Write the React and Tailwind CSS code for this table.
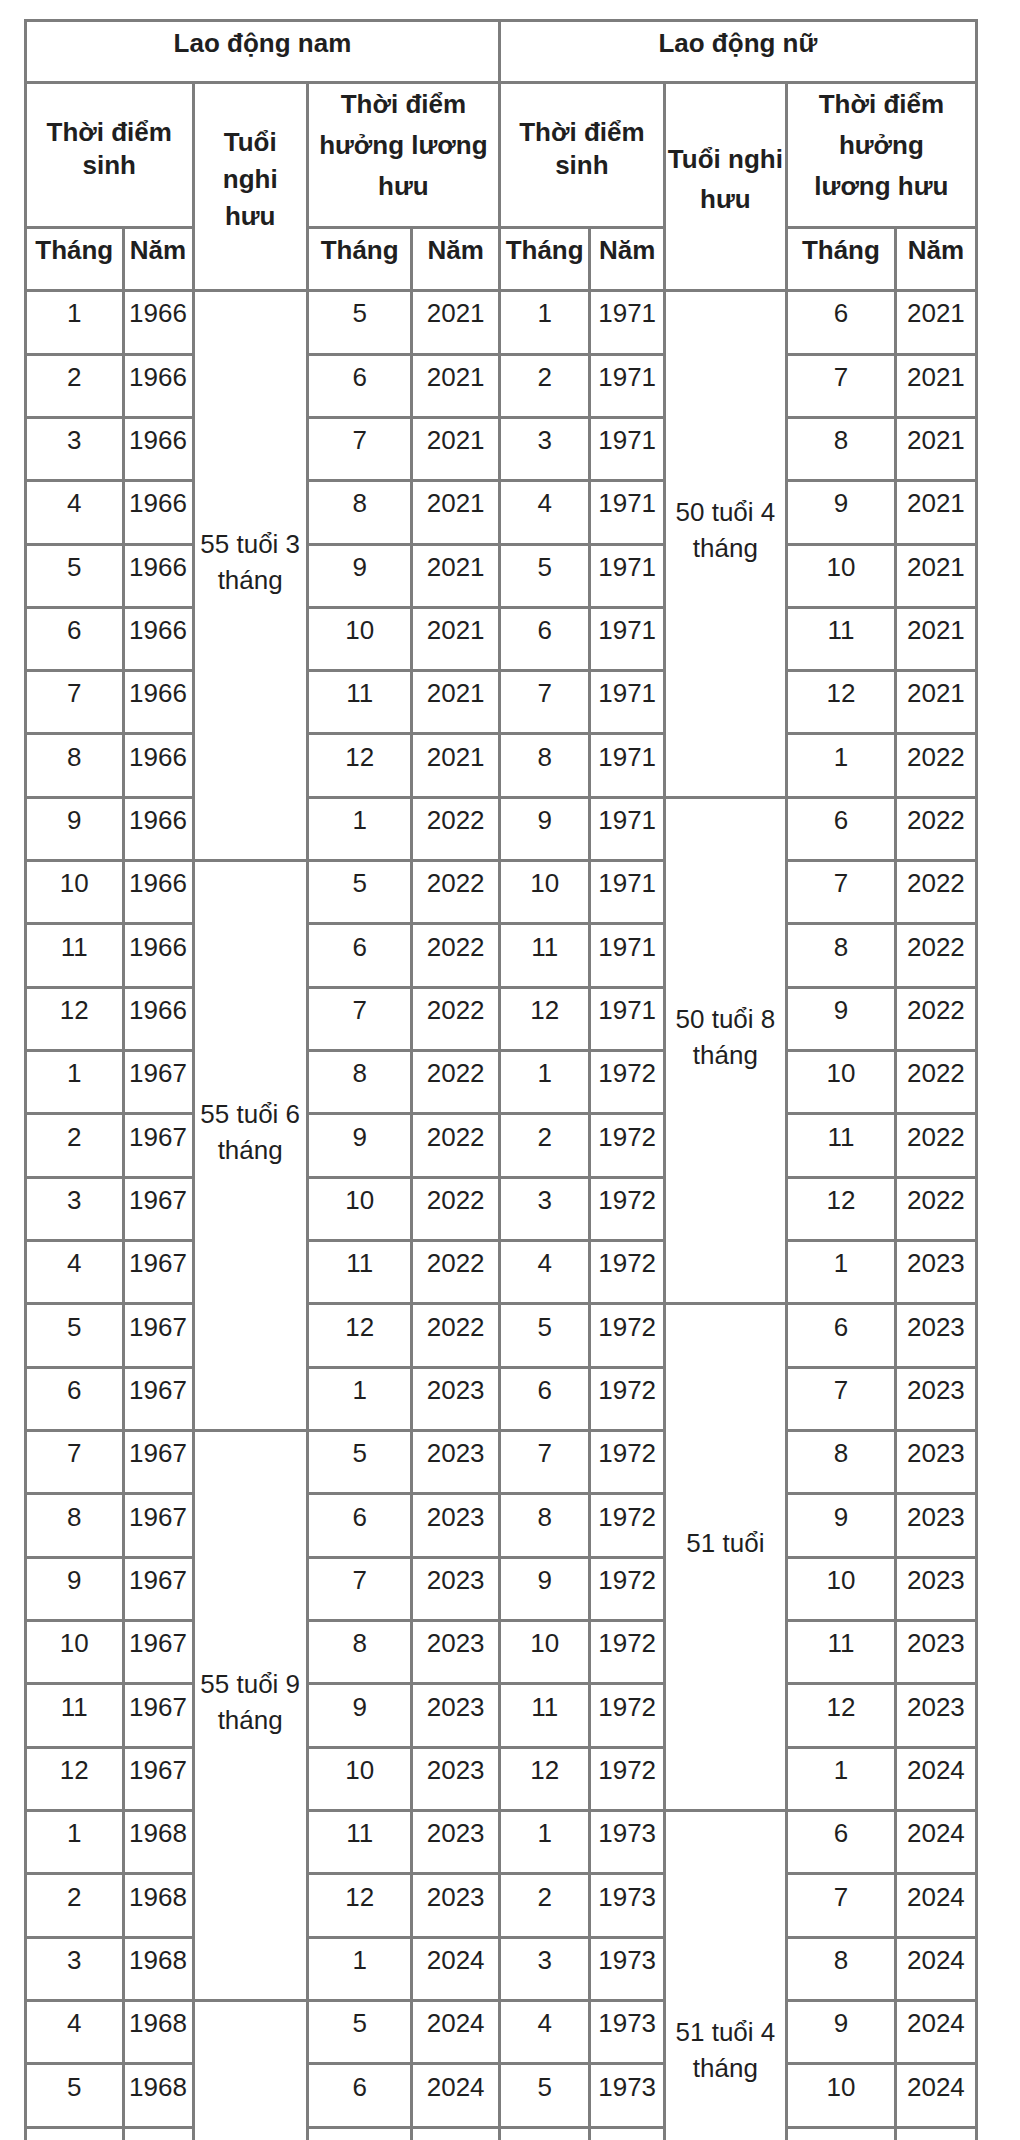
import React from 'react';

const MALE_AGES = ['55 tuổi 3 tháng', '55 tuổi 6 tháng', '55 tuổi 9 tháng', '56 tuổi'];
const MALE_AGE_MONTHS = [55 * 12 + 3, 55 * 12 + 6, 55 * 12 + 9, 56 * 12];
const FEMALE_AGES = ['50 tuổi 4 tháng', '50 tuổi 8 tháng', '51 tuổi', '51 tuổi 4 tháng'];
const FEMALE_AGE_MONTHS = [50 * 12 + 4, 50 * 12 + 8, 51 * 12, 51 * 12 + 4];

// rows rendered; grid keeps extra empty tracks so the last rowspans keep full height
const ROWS = 30;

// full class names so Tailwind picks them up
const SPAN = { 8: 'row-span-8', 9: 'row-span-9' };

const addMonths = (month, year, n) => {
  const total = year * 12 + (month - 1) + n;
  return { m: (total % 12) + 1, y: Math.floor(total / 12) };
};

const Cell = ({ children, className = '' }) => (
  <div className={`bg-white flex items-center justify-center text-center ${className}`}>
    <div>{children}</div>
  </div>
);

const buildRows = () => {
  const rows = [];
  for (let i = 0; i < ROWS; i++) {
    const male = addMonths(1, 1966, i);
    const female = addMonths(1, 1971, i);
    const mg = Math.floor(i / 9);
    const fg = Math.floor(i / 8);
    rows.push({
      male,
      female,
      mPension: addMonths(male.m, male.y, MALE_AGE_MONTHS[mg] + 1),
      fPension: addMonths(female.m, female.y, FEMALE_AGE_MONTHS[fg] + 1),
      maleAge: i % 9 === 0 ? MALE_AGES[mg] : null,
      femaleAge: i % 8 === 0 ? FEMALE_AGES[fg] : null,
    });
  }
  return rows;
};

const AgeText = ({ text }) => {
  const parts = text.split(' ');
  if (parts.length <= 2) return <>{text}</>;
  return (
    <>
      {parts.slice(0, 3).join(' ')}
      <br />
      {parts.slice(3).join(' ')}
    </>
  );
};

export default function App() {
  const rows = buildRows();
  const d = 'leading-[36px] pb-[18px]';
  const span = 'leading-[36px] pb-[28px]';
  const th = 'font-bold leading-[36px] pb-[19px]';

  return (
    <div
      className="h-[2140px] overflow-hidden bg-white pt-[19px] pl-[24px] text-[26px] text-[#1f1f1f]"
      style={{ fontFamily: '"Liberation Sans", Arial, sans-serif' }}
    >
      <div className="grid w-fit gap-[3px] p-[3px] bg-[#7d7d7d] grid-cols-[94.5px_67px_111.4px_101.5px_84.5px_87.5px_71.5px_119px_106px_78px] grid-rows-[58.5px_142.7px_60px_repeat(36,60.34px)]">
        {/* header row 1 */}
        <Cell className="col-span-5 font-bold leading-[36px] pb-[17px]">Lao động nam</Cell>
        <Cell className="col-span-5 font-bold leading-[36px] pb-[17px]">Lao động nữ</Cell>

        {/* header row 2 */}
        <Cell className="col-span-2 font-bold leading-[33px] pb-[12px]">
          Thời điểm<br />sinh
        </Cell>
        <Cell className="row-span-2 font-bold leading-[37px] pb-[14px]">
          Tuổi<br />nghi<br />hưu
        </Cell>
        <Cell className="col-span-2 font-bold leading-[41px] pb-[19px]">
          Thời điểm<br />hưởng lương<br />hưu
        </Cell>
        <Cell className="col-span-2 font-bold leading-[33px] pb-[12px]">
          Thời điểm<br />sinh
        </Cell>
        <Cell className="row-span-2 font-bold leading-[40px] pb-[14px]">
          Tuổi nghi<br />hưu
        </Cell>
        <Cell className="col-span-2 font-bold leading-[41px] pb-[19px]">
          Thời điểm<br />hưởng<br />lương hưu
        </Cell>

        {/* header row 3 */}
        <Cell className={th}>Tháng</Cell>
        <Cell className={th}>Năm</Cell>
        <Cell className={th}>Tháng</Cell>
        <Cell className={th}>Năm</Cell>
        <Cell className={th}>Tháng</Cell>
        <Cell className={th}>Năm</Cell>
        <Cell className={th}>Tháng</Cell>
        <Cell className={th}>Năm</Cell>

        {rows.map((r, i) => (
          <React.Fragment key={i}>
            <Cell className={d}>{r.male.m}</Cell>
            <Cell className={d}>{r.male.y}</Cell>
            {r.maleAge && (
              <Cell className={`${SPAN[9]} ${span}`}>
                <AgeText text={r.maleAge} />
              </Cell>
            )}
            <Cell className={d}>{r.mPension.m}</Cell>
            <Cell className={d}>{r.mPension.y}</Cell>
            <Cell className={d}>{r.female.m}</Cell>
            <Cell className={d}>{r.female.y}</Cell>
            {r.femaleAge && (
              <Cell className={`${SPAN[8]} ${span}`}>
                <AgeText text={r.femaleAge} />
              </Cell>
            )}
            <Cell className={d}>{r.fPension.m}</Cell>
            <Cell className={d}>{r.fPension.y}</Cell>
          </React.Fragment>
        ))}
      </div>
    </div>
  );
}
